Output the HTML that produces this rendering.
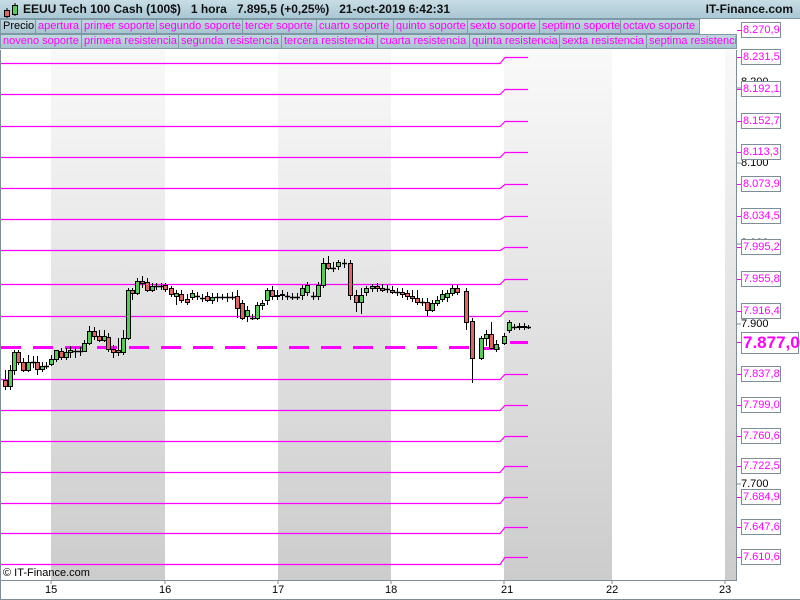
<!DOCTYPE html>
<html><head><meta charset="utf-8"><style>
*{margin:0;padding:0;box-sizing:border-box}
body{width:800px;height:600px;overflow:hidden;background:#fff;font-family:"Liberation Sans",sans-serif;position:relative}
#top{position:absolute;left:0;top:0;width:800px;height:19px;background:linear-gradient(#c8dde6,#a9c7d4);border-bottom:1px solid #7d99a5}
#top .t{position:absolute;top:2px;left:23px;font-size:12px;font-weight:bold;color:#111;white-space:pre}
#top .r{position:absolute;top:2px;right:7px;font-size:12px;font-weight:bold;color:#111}
.row{position:absolute;left:0;height:15px}
.b{position:absolute;top:0;height:15px;background:linear-gradient(#c2d8e1,#a8c4d0);border:1px solid #7d99a5;font-size:11px;color:#f0f;line-height:13px;padding-left:2px;white-space:nowrap;overflow:hidden}
.lab{position:absolute;left:741px;width:40px;height:16px;border:1px solid #7d8e99;background:#fff;color:#f0f;font-size:11px;line-height:14px;padding-left:1px}
.blk{position:absolute;left:741px;font-size:11px;color:#000}
.tick{position:absolute;left:737px;width:4px;height:1px;background:#f0f}
.x{position:absolute;top:584px;font-size:11px;color:#000}
</style></head><body>
<div id="top">
<svg style="position:absolute;left:3px;top:2px" width="16" height="16"><line x1="4" y1="6" x2="4" y2="16" stroke="#000"/><rect x="1.5" y="8.5" width="5" height="6" fill="#e06666" stroke="#000"/><line x1="12" y1="1" x2="12" y2="14" stroke="#000"/><rect x="9.5" y="3.5" width="5" height="9" fill="#55cc55" stroke="#000"/></svg>
<div class="t">EEUU Tech 100 Cash (100$)   1 hora   7.895,5 (+0,25%)   21-oct-2019 6:42:31</div>
<div class="r">IT-Finance.com</div>
</div>
<div class="row" style="top:19px">
<div class="b" style="left:0;width:36px;color:#000">Precio</div>
<div class="b" style="left:35px;width:47px">apertura</div>
<div class="b" style="left:81px;width:76px">primer soporte</div>
<div class="b" style="left:156px;width:87px">segundo soporte</div>
<div class="b" style="left:242px;width:75px">tercer soporte</div>
<div class="b" style="left:316px;width:78px">cuarto soporte</div>
<div class="b" style="left:393px;width:75px">quinto soporte</div>
<div class="b" style="left:467px;width:73px">sexto soporte</div>
<div class="b" style="left:539px;width:82px">septimo soporte</div>
<div class="b" style="left:620px;width:80px">octavo soporte</div>
</div>
<div class="row" style="top:34px">
<div class="b" style="left:0;width:82px">noveno soporte</div>
<div class="b" style="left:81px;width:98px">primera resistencia</div>
<div class="b" style="left:178px;width:104px">segunda resistencia</div>
<div class="b" style="left:281px;width:97px">tercera resistencia</div>
<div class="b" style="left:377px;width:93px">cuarta resistencia</div>
<div class="b" style="left:469px;width:91px">quinta resistencia</div>
<div class="b" style="left:559px;width:88px">sexta resistencia</div>
<div class="b" style="left:646px;width:91px">septima resistencia</div>
</div>
<svg id="ch" style="position:absolute;left:0;top:0" width="800" height="600">
<defs><linearGradient id="g" x1="0" y1="0" x2="0" y2="1"><stop offset="0" stop-color="#f9f9f9"/><stop offset="1" stop-color="#cccccc"/></linearGradient></defs>
<g id="bands">
<rect x="51" y="50" width="114" height="530" fill="url(#g)"/>
<rect x="278" y="50" width="113" height="530" fill="url(#g)"/>
<rect x="504" y="50" width="108" height="530" fill="url(#g)"/>
<rect x="725" y="50" width="12" height="530" fill="url(#g)"/>
</g>
<g id="lines" stroke="#f0f" stroke-width="1.2" fill="none"></g>
<g id="c"></g>
<line x1="0.5" y1="50" x2="0.5" y2="600" stroke="#7d8e99"/>
<line x1="736.5" y1="50" x2="736.5" y2="580" stroke="#7d8e99"/>
<line x1="0" y1="580.5" x2="737" y2="580.5" stroke="#7d8e99"/>
<line x1="0" y1="599.5" x2="800" y2="599.5" stroke="#7d8e99"/>
<g stroke="#7d8e99"><line x1="51" y1="580" x2="51" y2="584"/><line x1="165" y1="580" x2="165" y2="584"/><line x1="278" y1="580" x2="278" y2="584"/><line x1="391" y1="580" x2="391" y2="584"/><line x1="504" y1="580" x2="504" y2="584"/><line x1="612" y1="580" x2="612" y2="584"/><line x1="725" y1="580" x2="725" y2="584"/>
<line x1="737" y1="88" x2="741" y2="88"/><line x1="737" y1="163" x2="741" y2="163"/><line x1="737" y1="244" x2="741" y2="244"/><line x1="737" y1="324" x2="741" y2="324"/><line x1="737" y1="484" x2="741" y2="484"/></g>
</svg>
<div class="blk" style="top:76px">8.200</div>
<div class="blk" style="top:157px">8.100</div>
<div class="blk" style="top:237px">8.000</div>
<div class="blk" style="top:318px">7.900</div>
<div class="blk" style="top:478px">7.700</div>
<div id="labs"></div>
<div style="position:absolute;left:3px;top:567px;font-size:11px;color:#000">© IT-Finance.com</div>
<div class="x" style="left:45px">15</div><div class="x" style="left:159px">16</div><div class="x" style="left:272px">17</div><div class="x" style="left:385px">18</div><div class="x" style="left:501px">21</div><div class="x" style="left:606px">22</div><div class="x" style="left:719px">23</div>
<script>
var L=[["8.270,9",30,null],["8.231,5",57,63],["8.192,1",89,94],["8.152,7",121,126],["8.113,3",152,157],["8.073,9",184,188],["8.034,5",216,219],["7.995,2",247,250],["7.955,8",279,284],["7.916,4",311,316],["7.877,0",342,347],["7.837,8",374,379],["7.799,0",405,410],["7.760,6",436,441],["7.722,5",466,472],["7.684,9",497,503],["7.647,6",527,533],["7.610,6",557,564]];
var g=document.getElementById('lines'),s='',h='';
L.forEach(function(l){
 var y=l[1];
 if(l[0]=="7.877,0"){
  s+='<path d="M1 347.5H470" stroke-width="3" stroke-dasharray="20 12"/><path d="M480 348.5H500" stroke-width="3"/><path d="M510 342.5H528" stroke-width="3"/>';
  h+='<div class="lab" style="top:'+(y-10)+'px;height:22px;width:58px;font-size:17px;font-weight:bold;line-height:20px">'+l[0]+'</div>';
 } else {
  if(l[2]) s+='<path d="M1 '+(l[2]+.5)+'H500L505 '+(y+.5)+'H528"/>';
  h+='<div class="lab" style="top:'+(y-8)+'px">'+l[0]+'</div>';
 }
 h+='<div class="tick" style="top:'+y+'px"></div>';
});
g.innerHTML=s;document.getElementById('labs').innerHTML=h;
var C=[[5,380,386,370,390],[10,386,370,365,390],[14,370,352,350,375],[18,352,362,350,365],[23,362,370,358,372],[28,370,362,355,372],[33,362,362,356,368],[37,362,369,356,375],[42,369,366,362,372],[46,366,366,362,369],[51,364,359,355,366],[56,359,350,350,362],[61,351,357,348,360],[66,357,352,348,360],[70,352,350,346,358],[75,351,351,347,358],[80,351,351,347,356],[84,351,343,340,352],[89,343,331,326,345],[94,331,336,327,340],[99,336,340,330,342],[104,340,336,330,342],[108,337,349,333,352],[113,349,352,345,358],[118,350,352,338,356],[123,352,338,330,355],[128,338,290,288,340],[132,290,293,288,300],[137,293,281,278,295],[142,281,283,276,288],[147,282,290,278,292],[152,290,286,283,292],[156,286,286,283,290],[161,286,286,283,290],[165,285,289,283,292],[171,288,294,286,297],[176,296,293,290,305],[181,294,300,290,303],[187,299,302,294,305],[192,297,293,290,300],[197,296,296,292,300],[202,298,298,294,302],[207,296,300,292,302],[212,300,297,293,304],[217,297,297,293,302],[222,297,297,294,300],[227,297,297,293,302],[232,297,297,292,300],[237,296,308,290,318],[242,303,318,300,320],[247,316,310,306,322],[252,318,318,314,320],[257,318,305,302,320],[262,305,303,300,310],[267,300,290,288,305],[272,290,296,286,300],[277,296,295,290,300],[282,294,295,290,300],[287,296,296,292,300],[292,297,297,293,300],[297,297,297,293,300],[302,295,288,285,300],[307,292,285,282,296],[313,296,296,292,300],[318,296,285,282,300],[323,285,263,258,288],[328,263,268,256,270],[333,268,268,262,272],[338,266,262,260,270],[344,263,263,259,268],[350,263,295,260,300],[356,295,302,290,312],[361,302,295,288,314],[366,292,288,286,296],[372,288,286,284,292],[377,286,288,283,292],[382,288,290,284,292],[387,289,289,285,293],[392,290,292,286,294],[397,292,292,288,296],[402,292,294,288,298],[407,293,296,290,300],[412,296,298,290,302],[417,298,302,290,305],[422,302,302,298,306],[427,302,310,298,316],[432,310,303,300,312],[437,303,300,296,306],[442,299,294,290,302],[447,297,293,290,302],[452,293,288,285,296],[457,288,292,285,295],[466,291,322,288,330],[472,321,358,318,383],[481,358,338,336,360],[486,338,334,330,346],[491,334,348,322,350],[496,349,344,340,352],[504,343,336,333,345],[509,330,322,320,333],[514,327,327,324,330],[519,327,326,323,330],[524,327,326,323,330],[528,327,327,325,329]];
var o='';
C.forEach(function(c){var x=c[0],op=c[1],cl=c[2],hi=c[3],lo=c[4];
o+='<line x1="'+(x+.5)+'" y1="'+hi+'" x2="'+(x+.5)+'" y2="'+lo+'" stroke="#000"/>';
if(op==cl)o+='<line x1="'+(x-2)+'" y1="'+(op+.5)+'" x2="'+(x+3)+'" y2="'+(op+.5)+'" stroke="#000" stroke-width="1.5"/>';
else{var t=Math.min(op,cl),b=Math.max(op,cl);o+='<rect x="'+(x-1.5)+'" y="'+(t+.5)+'" width="4" height="'+(b-t)+'" fill="'+(cl<op?'#55cc55':'#e06666')+'" stroke="#000"/>';}
});
document.getElementById('c').innerHTML=o;
</script>
</body></html>
